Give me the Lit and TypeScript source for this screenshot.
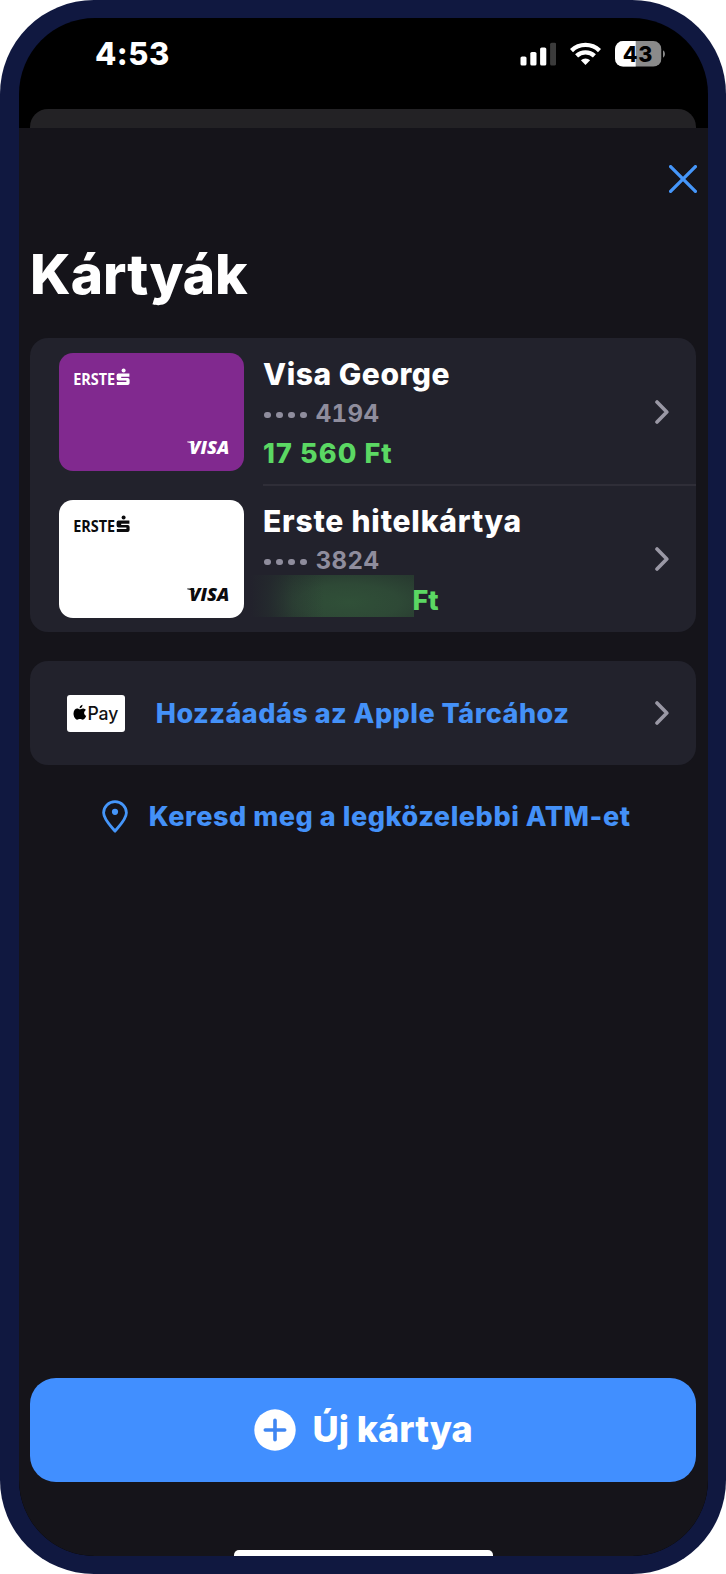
import { LitElement, html, css } from "lit";
import { customElement, property } from "lit/decorators.js";

@customElement("status-bar")
class StatusBar extends LitElement {
  static styles = css`
    :host {
      display: flex;
      align-items: center;
      justify-content: space-between;
      height: 71px;
      padding: 0 43px 0 76px;
      color: #fff;
    }
    .time { font-size: 31px; font-weight: 800; letter-spacing: 0.5px; }
    .icons { display: flex; align-items: center; gap: 14px; }
    svg { display: block; }
    .level { font: 800 21.5px Inter, sans-serif; letter-spacing: 0.7px; }
  `;
  render() {
    return html`
      <span class="time">4:53</span>
      <div class="icons">
        <svg width="36.5" height="24" viewBox="-0.5 0 36.5 24" fill="#fff">
          <rect x="0" y="14.5" width="6" height="9" rx="1.6" />
          <rect x="9.8" y="10" width="6.2" height="13.5" rx="1.6" />
          <rect x="19.6" y="5.5" width="6.2" height="18" rx="1.6" />
          <rect x="29.6" y="0.7" width="6" height="22.8" rx="1.6" fill="#3b3b3b" />
        </svg>
        <svg width="31" height="24" viewBox="0 0 31 24" fill="none" stroke="#fff" stroke-width="4.3">
          <path d="M1.5 8.6A20 20 0 0 1 29.5 8.6" />
          <path d="M6.6 13.9A12.8 12.8 0 0 1 24.4 13.9" />
          <path d="M15.5 23 10.9 18.3A6.6 6.6 0 0 1 20.1 18.3Z" fill="#fff" stroke="none" />
        </svg>
        <svg width="50" height="26" viewBox="0 0 50 26">
          <defs>
            <clipPath id="shell"><rect width="46.5" height="25.6" rx="8.2" /></clipPath>
          </defs>
          <g clip-path="url(#shell)">
            <rect width="46.5" height="26" fill="#8a8a8a" />
            <rect width="20.7" height="26" fill="#fff" />
          </g>
          <path d="M48 9.2Q50 10.5 50 13T48 16.8Z" fill="#8a8a8a" />
          <text class="level" x="22.9" y="20.6" text-anchor="middle" fill="#000">43</text>
        </svg>
      </div>
    `;
  }
}

@customElement("chevron-icon")
class ChevronIcon extends LitElement {
  static styles = css`
    :host { display: block; width: 14px; height: 24px; }
    svg { display: block; }
  `;
  render() {
    return html`<svg width="14" height="24" viewBox="0 0 14 24" fill="none" stroke="#9a98a5"
      stroke-width="3.6" stroke-linecap="round" stroke-linejoin="round">
      <path d="M2 2 11.8 12 2 22" />
    </svg>`;
  }
}

@customElement("bank-card")
class BankCard extends LitElement {
  @property() tone = "purple";
  static styles = css`
    :host { display: block; width: 185px; height: 117.5px; flex: none; }
    .card { height: 100%; border-radius: 14px; overflow: hidden; }
    .purple { background: #81298f; color: #fff; }
    .white { background: #fff; color: #0b0b0d; }
    svg { display: block; }
    .erste { font: 700 15.2px "Open Sans", sans-serif; }
    .visa { font: italic 800 17.6px "Open Sans", sans-serif; }
  `;
  render() {
    return html`<div class="card ${this.tone}">
      <svg width="185" height="117.5" viewBox="0 0 185 117.5" fill="currentColor">
        <text class="erste" x="14.2" y="32" textLength="42" lengthAdjust="spacingAndGlyphs">ERSTE</text>
        <circle cx="64.6" cy="17.6" r="2" />
        <path d="M59.4 20.6H70.4V23.7H62.2V25H68.6Q70.6 25 70.6 27V29.9Q70.6 31.9 68.6 31.9H57.8V28.9H67.4V27.6H59.6Q57.6 27.6 57.6 25.6V22.6Q57.6 20.6 59.4 20.6Z" />
        <path d="M128.2 88.6H134.6L136 92.4Q133 89.8 128.2 89.2Z" />
        <text class="visa" x="130.3" y="101.3" textLength="40" lengthAdjust="spacingAndGlyphs">VISA</text>
      </svg>
    </div>`;
  }
}

interface Card {
  tone: string;
  name: string;
  digits: string;
  amount?: string;
}

const CARDS: Card[] = [
  { tone: "purple", name: "Visa George", digits: "4194", amount: "17 560" },
  { tone: "white", name: "Erste hitelkártya", digits: "3824" },
];

@customElement("app-root")
class AppRoot extends LitElement {
  static styles = css`
    :host { display: block; background: #fff; font-family: Inter, sans-serif; }
    * { box-sizing: border-box; }
    svg { display: block; flex: none; }
    .phone {
      width: 726px;
      height: 1574px;
      padding: 18px 18px 18px 19px;
      border-radius: 94px;
      background: #101840;
    }
    .screen {
      display: flex;
      flex-direction: column;
      height: 1538px;
      border-radius: 76px;
      overflow: hidden;
      background: #000;
    }
    .peek { height: 19px; margin: 20px 12px 0 10.5px; border-radius: 18px 18px 0 0; background: #232225; }
    .sheet {
      flex: 1;
      display: flex;
      flex-direction: column;
      padding: 0 12px 0 10.5px;
      background: #15141a;
    }
    .close { align-self: flex-end; margin: 36.5px -0.5px 0 0; }
    h1 {
      margin: 46.5px 0 0 0.6px;
      font-size: 55px;
      line-height: 70px;
      font-weight: 850;
      letter-spacing: -0.05px;
      color: #fff;
    }
    .group { margin-top: 29px; border-radius: 18px; background: #22222c; }
    .row { display: flex; height: 147px; padding: 15px 0 0 29.5px; }
    .info { flex: 1; margin: 0 0 0 18.5px; display: flex; height: 132.5px; }
    .row:first-child .info { border-bottom: 2px solid #2f2e38; }
    .lines { flex: 1; padding: 0.5px 0 0 0.5px; }
    .name { font-size: 30px; line-height: 40px; font-weight: 800; letter-spacing: 0.55px; color: #fff; }
    .white .name { letter-spacing: 0.78px; }
    .number { display: flex; align-items: center; height: 40px; gap: 9px; color: #8f8d9d; }
    .dots { display: flex; gap: 5.1px; padding: 3px 0 0 1.2px; }
    .dots i { width: 6.8px; height: 6.8px; border-radius: 50%; background: currentColor; }
    .digits { font-size: 24px; font-weight: 700; letter-spacing: 0.45px; font-feature-settings: "tnum"; }
    .amount { display: flex; font-size: 27px; line-height: 39px; font-weight: 800; letter-spacing: 1.1px; color: #5bd863; white-space: pre; }
    .hidden {
      width: 163.5px;
      height: 42px;
      margin: -5.5px -1px 0 -13px;
      background:
        linear-gradient(90deg, #22222c 0, rgba(34, 34, 44, 0.72) 12%, rgba(34, 34, 44, 0.28) 26%, rgba(34, 34, 44, 0) 45%),
        radial-gradient(ellipse 62% 85% at 60% 65%, #305038 0, #2e4936 50%, #27382f 100%);
    }
    .hidden + span { position: relative; letter-spacing: 0; }
    .row chevron-icon { margin: 46.7px 27px 0 0; }
    .wallet { display: flex; align-items: center; height: 103.7px; margin-top: 29.2px; padding: 0 27px 0 37.5px; border-radius: 18px; background: #22222c; }
    .badge { width: 58px; height: 37px; border-radius: 3px; background: #fff; }
    .pay { font: 500 18px Inter, sans-serif; }
    .link { flex: 1; font-size: 27px; font-weight: 800; color: #4491f8; letter-spacing: 0.49px; white-space: nowrap; }
    .wallet .link { margin-left: 30.8px; }
    .atm { display: flex; align-items: center; height: 40px; margin-top: 32px; padding-left: 72px; }
    .atm .link { margin-left: 21.3px; letter-spacing: 0.56px; }
    .new {
      display: flex;
      align-items: center;
      height: 103.5px;
      margin-top: auto;
      padding-left: 224px;
      border-radius: 26px;
      background: #418fff;
      color: #fff;
      font-size: 36px;
      font-weight: 800;
      letter-spacing: 0;
    }
    .new span { margin: -1px 0 0 17px; }
    .home { align-self: center; width: 259px; height: 6px; margin: 68.5px 0 0 1px; border-radius: 5px 5px 0 0; background: #fff; }
  `;

  private card(c: Card) {
    return html`<div class="row ${c.tone}">
      <bank-card tone=${c.tone}></bank-card>
      <div class="info">
        <div class="lines">
          <div class="name">${c.name}</div>
          <div class="number">
            <div class="dots"><i></i><i></i><i></i><i></i></div>
            <span class="digits">${c.digits}</span>
          </div>
          <div class="amount">${c.amount ? html`<span>${c.amount} Ft</span>` : html`<div class="hidden"></div><span>Ft</span>`}</div>
        </div>
        <chevron-icon></chevron-icon>
      </div>
    </div>`;
  }

  render() {
    return html`<div class="phone">
      <div class="screen">
        <status-bar></status-bar>
        <div class="peek"></div>
        <div class="sheet">
          <svg class="close" width="28" height="28" viewBox="0 0 28 28" stroke="#4596fa" stroke-width="3.3" stroke-linecap="round">
            <path d="M1.6 1.6 26.4 26.4M26.4 1.6 1.6 26.4" />
          </svg>
          <h1>Kártyák</h1>
          <div class="group">${CARDS.map((c) => this.card(c))}</div>
          <div class="wallet">
            <svg class="badge" viewBox="0 0 58 37">
              <path d="M12.7 14.3C13.9 14.3 14.8 13.4 16.3 13.5 17.5 13.6 18.2 14.1 18.8 14.9 16.4 16.5 16.7 19.7 19.3 20.8 18.4 23.1 17.2 24.7 15.8 24.7 14.7 24.7 14.1 24.1 12.9 24.1 11.7 24.1 11.1 24.7 10.1 24.7 8.1 24.6 6.5 21.4 6.5 18.6 6.5 15.3 8.4 13.5 10.3 13.5 11.3 13.5 12.1 14.3 12.7 14.3ZM12.6 13.2C12.5 11.5 13.9 9.9 15.5 9.7 15.7 11.6 14.2 13.1 12.6 13.2Z" fill="#000" />
              <text class="pay" x="20.4" y="24.8" fill="#111" textLength="31" lengthAdjust="spacingAndGlyphs">Pay</text>
            </svg>
            <span class="link">Hozzáadás az Apple Tárcához</span>
            <chevron-icon></chevron-icon>
          </div>
          <div class="atm">
            <svg width="26" height="33" viewBox="0 0 26 33" fill="none" stroke="#4596fa" stroke-width="2.8" stroke-linejoin="round">
              <path d="M13 31.2C10.3 27.6 1.6 19.6 1.6 12.8A11.4 11.2 0 0 1 24.4 12.8C24.4 19.6 15.7 27.6 13 31.2Z" />
              <circle cx="13" cy="11.8" r="3.1" fill="#4596fa" stroke="none" />
            </svg>
            <span class="link">Keresd meg a legközelebbi ATM-et</span>
          </div>
          <div class="new">
            <svg width="42" height="42" viewBox="0 0 42 42">
              <circle cx="21" cy="21" r="20.7" fill="#fff" />
              <path d="M21 11.3V30.7M11.3 21H30.7" stroke="#3f86f2" stroke-width="3.6" stroke-linecap="round" />
            </svg>
            <span>Új kártya</span>
          </div>
          <div class="home"></div>
        </div>
      </div>
    </div>`;
  }
}
